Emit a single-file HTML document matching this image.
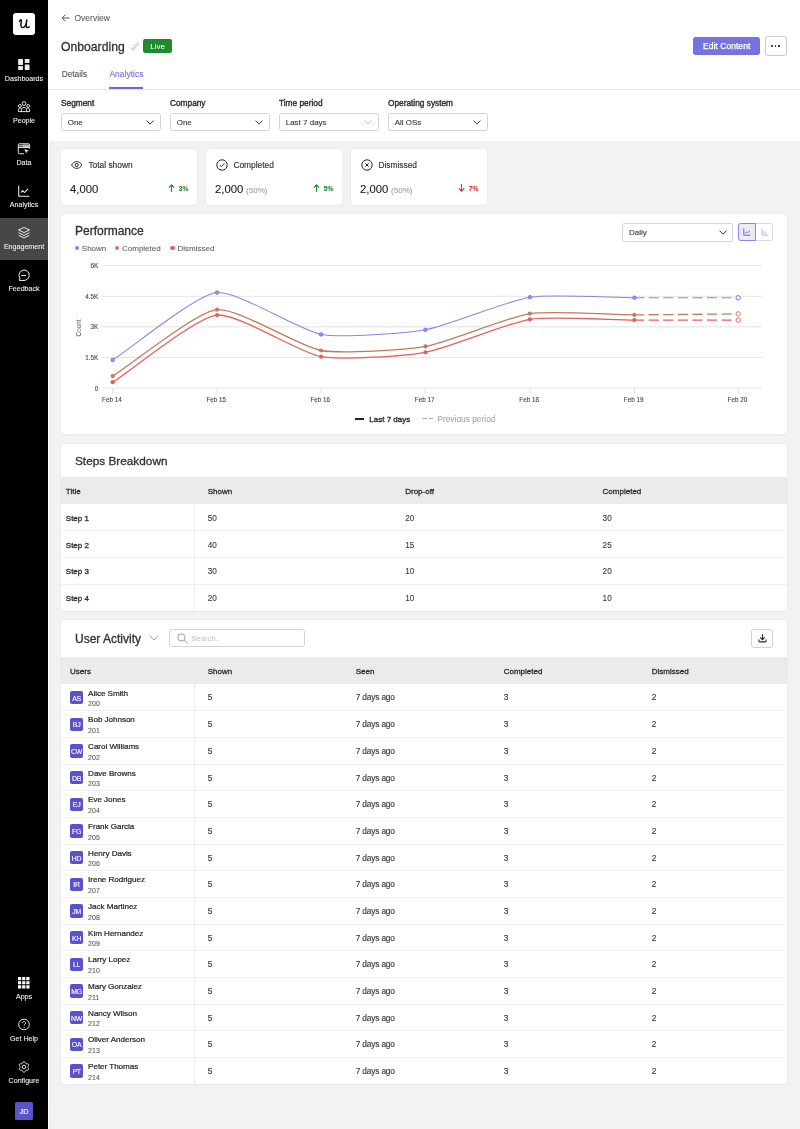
<!DOCTYPE html>
<html><head><meta charset="utf-8"><title>Onboarding Analytics</title>
<style>
html,body{margin:0;padding:0;}
body{width:800px;height:1129px;position:relative;overflow:hidden;background:#f2f2f3;font-family:"Liberation Sans", sans-serif;}
#root{position:absolute;left:0;top:0;width:800px;height:1129px;will-change:transform;}
.t{position:absolute;white-space:nowrap;}
.b{position:absolute;}
</style></head><body><div id="root">
<div class="b" style="left:0.00px;top:0.00px;width:48.00px;height:1129.00px;background:#000;"></div><div class="b" style="left:13.00px;top:13.00px;width:22.00px;height:22.00px;background:#fff;border-radius:3px;"></div><svg class="b" style="left:18.50px;top:19.30px;width:11px;height:10px;overflow:visible;" viewBox="0 0 11 10"><path d="M0.5 2.4C0.9 1.2 1.7 0.5 2.3 0.9 2.8 1.3 2.3 3 2 4.6 1.7 6.3 1.8 8.4 3.7 8.6 5.6 8.8 7 6.5 7.8 1 7.3 3.6 7 6 7.2 7.4 7.4 8.8 8.6 8.9 10.2 7.8" fill="none" stroke="#111" stroke-width="1.5" stroke-linecap="round" stroke-linejoin="round"/></svg><div class="b" style="left:0.00px;top:218.00px;width:48.00px;height:42.00px;background:#464648;"></div><svg class="b" style="left:18.00px;top:59.00px;width:12px;height:12px;overflow:visible;" viewBox="0 0 12 12"><g fill="#eee"><rect x="0.1" y="0" width="4.9" height="6" rx="0.4"/><rect x="6.75" y="0" width="4.75" height="4" rx="0.4"/><rect x="0.1" y="7.1" width="4.9" height="3.9" rx="0.4"/><rect x="6.75" y="5.6" width="4.75" height="5.4" rx="0.4"/></g></svg><div class="t" style="left:0.00px;top:76px;font-size:7.1px;line-height:7.1px;color:#eee;-webkit-text-stroke:0.1px #eee;width:48px;text-align:center;">Dashboards</div><svg class="b" style="left:18.00px;top:101.00px;width:12px;height:12px;overflow:visible;" viewBox="0 0 12 12"><g fill="none" stroke="#eee" stroke-width="0.95"><circle cx="6" cy="2.5" r="1.9"/><circle cx="1.9" cy="5" r="1.45"/><circle cx="10.1" cy="5" r="1.45"/><path d="M3.4 10.6V9.1c0-1.5 1.2-2.6 2.6-2.6s2.6 1.1 2.6 2.6v1.5"/><path d="M0.4 10.6V8.7c0-0.9 0.7-1.6 1.6-1.6 0.6 0 1 0.2 1.4 0.6"/><path d="M11.6 10.6V8.7c0-0.9-0.7-1.6-1.6-1.6-0.6 0-1 0.2-1.4 0.6"/><path d="M0.4 10.6h11.2"/></g></svg><div class="t" style="left:0.00px;top:118px;font-size:7.1px;line-height:7.1px;color:#eee;-webkit-text-stroke:0.1px #eee;width:48px;text-align:center;">People</div><svg class="b" style="left:18.00px;top:143.00px;width:12px;height:12px;overflow:visible;" viewBox="0 0 12 12"><g fill="none" stroke="#eee" stroke-width="0.95"><path d="M6 10.75H1.3Q0.3 10.75 0.3 9.7V1.8Q0.3 0.75 1.3 0.75H10.6Q11.6 0.75 11.6 1.8V5.6"/><path d="M0.3 4.5H11.6"/><rect x="5" y="2.1" width="5.3" height="1.2"/></g><rect x="1.1" y="1.9" width="3.2" height="1.7" fill="#aaa"/><path d="M6.3 6L11.1 7.8 8.9 8.6 8.3 10.6Z" fill="#eee"/></svg><div class="t" style="left:0.00px;top:160px;font-size:7.1px;line-height:7.1px;color:#eee;-webkit-text-stroke:0.1px #eee;width:48px;text-align:center;">Data</div><svg class="b" style="left:18.00px;top:185.00px;width:12px;height:12px;overflow:visible;" viewBox="0 0 12 12"><g fill="none" stroke="#eee" stroke-width="1.05" stroke-linejoin="round" stroke-linecap="round"><path d="M0.75 1V11.25H11"/><path d="M3.25 7.3L4.6 5.5 6.5 7.5 9.75 4.1"/></g></svg><div class="t" style="left:0.00px;top:202px;font-size:7.1px;line-height:7.1px;color:#eee;-webkit-text-stroke:0.1px #eee;width:48px;text-align:center;">Analytics</div><svg class="b" style="left:18.00px;top:227.00px;width:12px;height:12px;overflow:visible;" viewBox="0 0 12 12"><g fill="none" stroke="#eee" stroke-width="0.95" stroke-linejoin="round"><path d="M0.5 3L6 0.5 11.5 3 6 5.6Z"/><path d="M0.5 5.7L6 8.4 11.5 5.7"/><path d="M0.5 8.3L6 11 11.5 8.3"/></g></svg><div class="t" style="left:0.00px;top:244px;font-size:7.1px;line-height:7.1px;color:#eee;-webkit-text-stroke:0.1px #eee;width:48px;text-align:center;">Engagement</div><svg class="b" style="left:18.00px;top:269.00px;width:12px;height:12px;overflow:visible;" viewBox="0 0 12 12"><g fill="none" stroke="#eee" stroke-width="1"><path d="M6 1.05A5.2 5.2 0 0 1 6 11.45H1.3L1.9 9.2A5.2 5.2 0 0 1 6 1.05Z" stroke-linejoin="round"/><path d="M3.3 6.5H8"/></g></svg><div class="t" style="left:0.00px;top:286px;font-size:7.1px;line-height:7.1px;color:#eee;-webkit-text-stroke:0.1px #eee;width:48px;text-align:center;">Feedback</div><svg class="b" style="left:18.00px;top:976.60px;width:12px;height:12px;overflow:visible;" viewBox="0 0 12 12"><rect x="0.00" y="0.00" width="3.2" height="3.2" rx="0.3" fill="#fff"/><rect x="0.00" y="4.15" width="3.2" height="3.2" rx="0.3" fill="#fff"/><rect x="0.00" y="8.30" width="3.2" height="3.2" rx="0.3" fill="#fff"/><rect x="4.15" y="0.00" width="3.2" height="3.2" rx="0.3" fill="#fff"/><rect x="4.15" y="4.15" width="3.2" height="3.2" rx="0.3" fill="#fff"/><rect x="4.15" y="8.30" width="3.2" height="3.2" rx="0.3" fill="#fff"/><rect x="8.30" y="0.00" width="3.2" height="3.2" rx="0.3" fill="#fff"/><rect x="8.30" y="4.15" width="3.2" height="3.2" rx="0.3" fill="#fff"/><rect x="8.30" y="8.30" width="3.2" height="3.2" rx="0.3" fill="#fff"/></svg><div class="t" style="left:0.00px;top:994px;font-size:7.1px;line-height:7.1px;color:#eee;-webkit-text-stroke:0.1px #eee;width:48px;text-align:center;">Apps</div><svg class="b" style="left:18.00px;top:1018.80px;width:12px;height:12px;overflow:visible;" viewBox="0 0 12 12"><g fill="none" stroke="#eee" stroke-width="0.95"><circle cx="6" cy="5.5" r="5.3"/><path d="M4.4 4.2c0-1 0.7-1.6 1.6-1.6s1.6 0.6 1.6 1.5c0 1.2-1.5 1.2-1.5 2.6"/></g><circle cx="6.1" cy="8.3" r="0.65" fill="#eee"/></svg><div class="t" style="left:0.00px;top:1036px;font-size:7.1px;line-height:7.1px;color:#eee;-webkit-text-stroke:0.1px #eee;width:48px;text-align:center;">Get Help</div><svg class="b" style="left:18.00px;top:1060.90px;width:12px;height:12px;overflow:visible;" viewBox="0 0 12 12"><g fill="none" stroke="#eee" stroke-width="1"><path d="M6.00 0.65 L6.28 0.69 L6.54 0.82 L6.79 1.02 L7.00 1.27 L7.19 1.56 L7.35 1.85 L7.49 2.12 L7.62 2.35 L7.76 2.54 L7.92 2.67 L8.12 2.74 L8.35 2.77 L8.62 2.77 L8.92 2.75 L9.25 2.75 L9.59 2.77 L9.92 2.83 L10.21 2.94 L10.46 3.11 L10.63 3.32 L10.73 3.59 L10.76 3.88 L10.71 4.19 L10.60 4.51 L10.44 4.81 L10.27 5.09 L10.11 5.35 L9.97 5.58 L9.88 5.80 L9.85 6.00 L9.88 6.20 L9.97 6.42 L10.11 6.65 L10.27 6.91 L10.44 7.19 L10.60 7.49 L10.71 7.81 L10.76 8.12 L10.73 8.41 L10.63 8.67 L10.46 8.89 L10.21 9.06 L9.92 9.17 L9.59 9.23 L9.25 9.25 L8.92 9.25 L8.62 9.23 L8.35 9.23 L8.12 9.26 L7.92 9.33 L7.76 9.46 L7.62 9.65 L7.49 9.88 L7.35 10.15 L7.19 10.44 L7.00 10.73 L6.79 10.98 L6.54 11.18 L6.28 11.31 L6.00 11.35 L5.72 11.31 L5.46 11.18 L5.21 10.98 L5.00 10.73 L4.81 10.44 L4.65 10.15 L4.51 9.88 L4.38 9.65 L4.24 9.46 L4.08 9.33 L3.88 9.26 L3.65 9.23 L3.38 9.23 L3.08 9.25 L2.75 9.25 L2.41 9.23 L2.08 9.17 L1.79 9.06 L1.54 8.89 L1.37 8.68 L1.27 8.41 L1.24 8.12 L1.29 7.81 L1.40 7.49 L1.56 7.19 L1.73 6.91 L1.89 6.65 L2.03 6.42 L2.12 6.20 L2.15 6.00 L2.12 5.80 L2.03 5.58 L1.89 5.35 L1.73 5.09 L1.56 4.81 L1.40 4.51 L1.29 4.19 L1.24 3.88 L1.27 3.59 L1.37 3.32 L1.54 3.11 L1.79 2.94 L2.08 2.83 L2.41 2.77 L2.75 2.75 L3.08 2.75 L3.38 2.77 L3.65 2.77 L3.88 2.74 L4.08 2.67 L4.24 2.54 L4.38 2.35 L4.51 2.12 L4.65 1.85 L4.81 1.56 L5.00 1.27 L5.21 1.02 L5.46 0.82 L5.72 0.69 L6.00 0.65Z" stroke-linejoin="round"/><circle cx="6" cy="6" r="1.75"/></g></svg><div class="t" style="left:0.00px;top:1078px;font-size:7.1px;line-height:7.1px;color:#eee;-webkit-text-stroke:0.1px #eee;width:48px;text-align:center;">Configure</div><div class="b" style="left:15.00px;top:1102.00px;width:18.00px;height:18.00px;background:#5a54c6;border-radius:1.5px;"></div><div class="t" style="left:15.00px;top:1108px;font-size:7.2px;line-height:7.2px;color:#fff;-webkit-text-stroke:0.12px #fff;width:18px;text-align:center;">JD</div><div class="b" style="left:48.00px;top:0.00px;width:752.00px;height:141.00px;background:#fff;"></div><div class="b" style="left:48.00px;top:141.00px;width:1.30px;height:988.00px;background:#fff;"></div><div class="b" style="left:48.00px;top:88.80px;width:752.00px;height:1.00px;background:#e4e4e7;"></div><svg class="b" style="left:61.00px;top:14.30px;width:9px;height:8px;overflow:visible;" viewBox="0 0 9 8"><path d="M8.6 4H1.2M4.4 0.7L1.1 4l3.3 3.3" fill="none" stroke="#555" stroke-width="1"/></svg><div class="t" style="left:74.50px;top:14px;font-size:8.5px;line-height:8.5px;color:#666;-webkit-text-stroke:0.12px #666;">Overview</div><div class="t" style="left:61.00px;top:41px;font-size:12.2px;line-height:12.2px;color:#333;-webkit-text-stroke:0.3px #333;">Onboarding</div><svg class="b" style="left:130.50px;top:41.50px;width:8px;height:9px;overflow:visible;" viewBox="0 0 8 9"><path d="M1.2 8.2l0.3-2.2 4.6-4.8c0.4-0.4 0.9-0.4 1.2 0 0.3 0.3 0.3 0.8 0 1.1L2.8 7.3z" fill="none" stroke="#aaa" stroke-width="0.75"/></svg><div class="b" style="left:143.20px;top:39.00px;width:28.80px;height:14.00px;background:#1f8a2e;border-radius:2px;"></div><div class="t" style="left:143.20px;top:43px;font-size:8px;line-height:8px;color:#fff;-webkit-text-stroke:0.02px #fff;width:28.8px;text-align:center;">Live</div><div class="b" style="left:693.30px;top:36.80px;width:66.70px;height:18.50px;background:#7772e1;border-radius:2.7px;"></div><div class="t" style="left:693.30px;top:42px;font-size:8.5px;line-height:8.5px;color:#fff;letter-spacing:0.05px;-webkit-text-stroke:0.25px #fff;width:66.7px;text-align:center;">Edit Content</div><div class="b" style="left:764.50px;top:36.30px;width:22.50px;height:19.30px;background:#fff;border:0.8px solid #c9c9cf;border-radius:2.7px;box-sizing:border-box;"></div><div class="b" style="left:771.45px;top:45.40px;width:1.50px;height:1.50px;background:#222;border-radius:50%;"></div><div class="b" style="left:774.95px;top:45.40px;width:1.50px;height:1.50px;background:#222;border-radius:50%;"></div><div class="b" style="left:778.45px;top:45.40px;width:1.50px;height:1.50px;background:#222;border-radius:50%;"></div><div class="t" style="left:61.70px;top:70px;font-size:8.3px;line-height:8.3px;color:#555;-webkit-text-stroke:0.12px #555;">Details</div><div class="t" style="left:109.40px;top:70px;font-size:8.5px;line-height:8.5px;color:#7770e0;-webkit-text-stroke:0.12px #7770e0;">Analytics</div><div class="b" style="left:109.40px;top:87.30px;width:33.90px;height:1.70px;background:#6f67e0;"></div><div class="t" style="left:61.00px;top:99px;font-size:8.3px;line-height:8.3px;color:#333;-webkit-text-stroke:0.4px #333;">Segment</div><div class="b" style="left:61.00px;top:113.00px;width:100.00px;height:18.30px;background:#fff;border:0.8px solid #d3d3d8;border-radius:2.7px;box-sizing:border-box;"></div><div class="t" style="left:67.70px;top:119px;font-size:8px;line-height:8px;color:#3a3a3a;-webkit-text-stroke:0.12px #3a3a3a;">One</div><svg class="b" style="left:146.00px;top:119.60px;width:8px;height:5px;overflow:visible;" viewBox="0 0 8 5"><path d="M0.5 0.6L4 4.2 7.5 0.6" fill="none" stroke="#333" stroke-width="1"/></svg><div class="t" style="left:170.00px;top:99px;font-size:8.3px;line-height:8.3px;color:#333;-webkit-text-stroke:0.4px #333;">Company</div><div class="b" style="left:170.00px;top:113.00px;width:100.00px;height:18.30px;background:#fff;border:0.8px solid #d3d3d8;border-radius:2.7px;box-sizing:border-box;"></div><div class="t" style="left:176.70px;top:119px;font-size:8px;line-height:8px;color:#3a3a3a;-webkit-text-stroke:0.12px #3a3a3a;">One</div><svg class="b" style="left:255.00px;top:119.60px;width:8px;height:5px;overflow:visible;" viewBox="0 0 8 5"><path d="M0.5 0.6L4 4.2 7.5 0.6" fill="none" stroke="#333" stroke-width="1"/></svg><div class="t" style="left:279.00px;top:99px;font-size:8.3px;line-height:8.3px;color:#333;-webkit-text-stroke:0.4px #333;">Time period</div><div class="b" style="left:279.00px;top:113.00px;width:100.00px;height:18.30px;background:#fff;border:0.8px solid #d3d3d8;border-radius:2.7px;box-sizing:border-box;"></div><div class="t" style="left:285.70px;top:119px;font-size:8px;line-height:8px;color:#3a3a3a;-webkit-text-stroke:0.12px #3a3a3a;">Last 7 days</div><svg class="b" style="left:364.00px;top:119.60px;width:8px;height:5px;overflow:visible;" viewBox="0 0 8 5"><path d="M0.5 0.6L4 4.2 7.5 0.6" fill="none" stroke="#c3c3c8" stroke-width="1"/></svg><div class="t" style="left:388.00px;top:99px;font-size:8.3px;line-height:8.3px;color:#333;-webkit-text-stroke:0.4px #333;">Operating system</div><div class="b" style="left:388.00px;top:113.00px;width:100.00px;height:18.30px;background:#fff;border:0.8px solid #d3d3d8;border-radius:2.7px;box-sizing:border-box;"></div><div class="t" style="left:394.70px;top:119px;font-size:8px;line-height:8px;color:#3a3a3a;-webkit-text-stroke:0.12px #3a3a3a;">All OSs</div><svg class="b" style="left:473.00px;top:119.60px;width:8px;height:5px;overflow:visible;" viewBox="0 0 8 5"><path d="M0.5 0.6L4 4.2 7.5 0.6" fill="none" stroke="#333" stroke-width="1"/></svg><div class="b" style="left:61.00px;top:149.40px;width:136.00px;height:55.40px;background:#fff;border-radius:4px;box-shadow:0 0 0 0.6px #e7e7eb, 0 0.6px 1.2px rgba(0,0,0,0.04);"></div><svg class="b" style="left:71.00px;top:161.30px;width:11.5px;height:8px;overflow:visible;" viewBox="0 0 11.5 8"><path d="M0.6 4C1.8 1.8 3.6 0.6 5.75 0.6S9.7 1.8 10.9 4C9.7 6.2 7.9 7.4 5.75 7.4S1.8 6.2 0.6 4z" fill="none" stroke="#2a2a2a" stroke-width="1"/><circle cx="5.75" cy="4" r="1.6" fill="none" stroke="#2a2a2a" stroke-width="1"/></svg><div class="t" style="left:88.40px;top:161px;font-size:8.4px;line-height:8.4px;color:#333;-webkit-text-stroke:0.15px #333;">Total shown</div><div class="t" style="left:70.00px;top:184px;font-size:11.3px;line-height:11.3px;color:#222;-webkit-text-stroke:0.1px #222;">4,000</div><svg class="b" style="left:168.00px;top:184.30px;width:7px;height:8px;overflow:visible;" viewBox="0 0 7 8"><path d="M3.5 8V0.9M0.8 3.6L3.5 0.9 6.2 3.6" fill="none" stroke="#2b8a37" stroke-width="1.15"/></svg><div class="t" style="left:178.80px;top:186px;font-size:6.6px;line-height:6.6px;color:#2b8a37;font-weight:700;-webkit-text-stroke:0.12px #2b8a37;">3%</div><div class="b" style="left:206.00px;top:149.40px;width:136.00px;height:55.40px;background:#fff;border-radius:4px;box-shadow:0 0 0 0.6px #e7e7eb, 0 0.6px 1.2px rgba(0,0,0,0.04);"></div><svg class="b" style="left:216.00px;top:159.30px;width:12px;height:12px;overflow:visible;" viewBox="0 0 12 12"><circle cx="6" cy="6" r="5.2" fill="none" stroke="#2a2a2a" stroke-width="1"/><path d="M3.7 6.1l1.6 1.6 3.1-3.3" fill="none" stroke="#2a2a2a" stroke-width="1"/></svg><div class="t" style="left:233.40px;top:161px;font-size:8.4px;line-height:8.4px;color:#333;-webkit-text-stroke:0.15px #333;">Completed</div><div class="t" style="left:215.00px;top:184px;font-size:11.3px;line-height:11.3px;color:#222;-webkit-text-stroke:0.1px #222;">2,000</div><div class="t" style="left:246.10px;top:187px;font-size:8px;line-height:8px;color:#a3a3a3;-webkit-text-stroke:0.12px #a3a3a3;">(50%)</div><svg class="b" style="left:313.00px;top:184.30px;width:7px;height:8px;overflow:visible;" viewBox="0 0 7 8"><path d="M3.5 8V0.9M0.8 3.6L3.5 0.9 6.2 3.6" fill="none" stroke="#2b8a37" stroke-width="1.15"/></svg><div class="t" style="left:323.80px;top:186px;font-size:6.6px;line-height:6.6px;color:#2b8a37;font-weight:700;-webkit-text-stroke:0.12px #2b8a37;">5%</div><div class="b" style="left:351.00px;top:149.40px;width:136.00px;height:55.40px;background:#fff;border-radius:4px;box-shadow:0 0 0 0.6px #e7e7eb, 0 0.6px 1.2px rgba(0,0,0,0.04);"></div><svg class="b" style="left:361.00px;top:159.30px;width:12px;height:12px;overflow:visible;" viewBox="0 0 12 12"><circle cx="6" cy="6" r="5.2" fill="none" stroke="#2a2a2a" stroke-width="1"/><path d="M4.3 4.3l3.4 3.4M7.7 4.3l-3.4 3.4" fill="none" stroke="#2a2a2a" stroke-width="1"/></svg><div class="t" style="left:378.40px;top:161px;font-size:8.4px;line-height:8.4px;color:#333;-webkit-text-stroke:0.15px #333;">Dismissed</div><div class="t" style="left:360.00px;top:184px;font-size:11.3px;line-height:11.3px;color:#222;-webkit-text-stroke:0.1px #222;">2,000</div><div class="t" style="left:391.10px;top:187px;font-size:8px;line-height:8px;color:#a3a3a3;-webkit-text-stroke:0.12px #a3a3a3;">(50%)</div><svg class="b" style="left:458.00px;top:184.30px;width:7px;height:8px;overflow:visible;" viewBox="0 0 7 8"><path d="M3.5 0V7.1M0.8 4.4L3.5 7.1 6.2 4.4" fill="none" stroke="#df2f2c" stroke-width="1.15"/></svg><div class="t" style="left:468.80px;top:186px;font-size:6.6px;line-height:6.6px;color:#df2f2c;font-weight:700;-webkit-text-stroke:0.12px #df2f2c;">7%</div><div class="b" style="left:61.00px;top:213.80px;width:726.00px;height:220.40px;background:#fff;border-radius:4px;box-shadow:0 0 0 0.6px #e7e7eb, 0 0.6px 1.2px rgba(0,0,0,0.04);"></div><div class="t" style="left:75.00px;top:225px;font-size:12px;line-height:12px;color:#333;-webkit-text-stroke:0.32px #333;">Performance</div><div class="b" style="left:74.60px;top:245.60px;width:4.40px;height:4.40px;background:#8880e6;border-radius:50%;"></div><div class="t" style="left:81.80px;top:245px;font-size:8px;line-height:8px;color:#5e5e5e;-webkit-text-stroke:0.08px #5e5e5e;">Shown</div><div class="b" style="left:114.80px;top:245.60px;width:4.40px;height:4.40px;background:#c47a58;border-radius:50%;"></div><div class="t" style="left:122.00px;top:245px;font-size:8px;line-height:8px;color:#5e5e5e;-webkit-text-stroke:0.08px #5e5e5e;">Completed</div><div class="b" style="left:170.30px;top:245.60px;width:4.40px;height:4.40px;background:#e35f5f;border-radius:50%;"></div><div class="t" style="left:177.50px;top:245px;font-size:8px;line-height:8px;color:#5e5e5e;-webkit-text-stroke:0.08px #5e5e5e;">Dismissed</div><div class="b" style="left:622.40px;top:223.30px;width:111.00px;height:18.30px;background:#fff;border:0.8px solid #d3d3d8;border-radius:2.7px;box-sizing:border-box;"></div><div class="t" style="left:629.00px;top:229px;font-size:8px;line-height:8px;color:#3a3a3a;-webkit-text-stroke:0.12px #3a3a3a;">Daily</div><svg class="b" style="left:718.50px;top:229.60px;width:8px;height:5px;overflow:visible;" viewBox="0 0 8 5"><path d="M0.5 0.6L4 4.2 7.5 0.6" fill="none" stroke="#333" stroke-width="1"/></svg><div class="b" style="left:738.10px;top:223.30px;width:35.00px;height:17.30px;background:#fff;border:0.8px solid #d8d8e0;border-radius:2.7px;box-sizing:border-box;"></div><div class="b" style="left:738.10px;top:223.30px;width:17.50px;height:17.30px;background:#ebebf2;border:1px solid #8c84ea;border-radius:2.7px 0 0 2.7px;box-sizing:border-box;"></div><svg class="b" style="left:743.00px;top:228.00px;width:8px;height:8px;overflow:visible;" viewBox="0 0 8 8"><path d="M0.8 0.3V7.2H7.6" fill="none" stroke="#6f66df" stroke-width="1"/><path d="M2 5.3l1.6-1.3 1 0.8 2.4-2.2" fill="none" stroke="#6f66df" stroke-width="0.9"/></svg><svg class="b" style="left:760.50px;top:228.00px;width:8px;height:8px;overflow:visible;" viewBox="0 0 8 8"><path d="M1 0.8V7.2H7.4M2.9 2.5V6.2M4.8 3.6V6.2" fill="none" stroke="#b5b0ee" stroke-width="0.9"/></svg><svg class="b" style="left:0;top:0;width:800px;height:1129px;" viewBox="0 0 800 1129"><line x1="102.3" y1="265.65" x2="762.2" y2="265.65" stroke="#e0e0e5" stroke-width="0.9"/><line x1="102.3" y1="296.25" x2="762.2" y2="296.25" stroke="#e0e0e5" stroke-width="0.9"/><line x1="102.3" y1="326.85" x2="762.2" y2="326.85" stroke="#e0e0e5" stroke-width="0.9"/><line x1="102.3" y1="357.45" x2="762.2" y2="357.45" stroke="#e0e0e5" stroke-width="0.9"/><line x1="102.3" y1="388.05" x2="762.2" y2="388.05" stroke="#e0e0e5" stroke-width="0.9"/><line x1="112.67" y1="388.05" x2="112.67" y2="393.6" stroke="#e0e0e5" stroke-width="0.9"/><line x1="217.05" y1="388.05" x2="217.05" y2="393.6" stroke="#e0e0e5" stroke-width="0.9"/><line x1="321.05" y1="388.05" x2="321.05" y2="393.6" stroke="#e0e0e5" stroke-width="0.9"/><line x1="425.45" y1="388.05" x2="425.45" y2="393.6" stroke="#e0e0e5" stroke-width="0.9"/><line x1="529.9" y1="388.05" x2="529.9" y2="393.6" stroke="#e0e0e5" stroke-width="0.9"/><line x1="634.4" y1="388.05" x2="634.4" y2="393.6" stroke="#e0e0e5" stroke-width="0.9"/><line x1="738.2" y1="388.05" x2="738.2" y2="393.6" stroke="#e0e0e5" stroke-width="0.9"/><path d="M112.67 359.96 C133.55 346.49 195.14 295.29 217.05 292.60 C236.82 290.18 299.48 330.55 321.05 334.40 C341.16 337.99 405.05 333.44 425.45 329.80 C446.82 325.99 508.52 300.43 529.90 297.15 C550.31 294.02 613.50 297.68 634.40 297.75" fill="none" stroke="#8a82e8" stroke-width="1.05"/><path d="M634.40 297.75 C655.16 297.81 717.44 297.79 738.20 297.80" fill="none" stroke="#8a82e8" stroke-width="1.05" stroke-dasharray="10 4.5"/><circle cx="112.67" cy="359.96" r="1.75" fill="#9c95ee" stroke="#6d63e0" stroke-width="0.8"/><circle cx="217.05" cy="292.6" r="1.75" fill="#9c95ee" stroke="#6d63e0" stroke-width="0.8"/><circle cx="321.05" cy="334.4" r="1.75" fill="#9c95ee" stroke="#6d63e0" stroke-width="0.8"/><circle cx="425.45" cy="329.8" r="1.75" fill="#9c95ee" stroke="#6d63e0" stroke-width="0.8"/><circle cx="529.9" cy="297.15" r="1.75" fill="#9c95ee" stroke="#6d63e0" stroke-width="0.8"/><circle cx="634.4" cy="297.75" r="1.75" fill="#9c95ee" stroke="#6d63e0" stroke-width="0.8"/><circle cx="738.2" cy="297.8" r="2.2" fill="#fff" stroke="#6d63e0" stroke-width="0.95"/><path d="M112.67 376.10 C133.55 362.82 195.15 312.39 217.05 309.70 C236.83 307.27 299.51 346.71 321.05 350.50 C341.19 354.05 405.05 350.00 425.45 346.40 C446.82 342.62 508.52 316.83 529.90 313.60 C550.31 310.51 613.50 314.77 634.40 314.80" fill="none" stroke="#c47a58" stroke-width="1.3"/><path d="M634.40 314.80 C655.16 314.83 717.44 314.08 738.20 313.90" fill="none" stroke="#c47a58" stroke-width="1.3" stroke-dasharray="10 4.5"/><circle cx="112.67" cy="376.1" r="2.1" fill="#c47a58"/><circle cx="217.05" cy="309.7" r="2.1" fill="#c47a58"/><circle cx="321.05" cy="350.5" r="2.1" fill="#c47a58"/><circle cx="425.45" cy="346.4" r="2.1" fill="#c47a58"/><circle cx="529.9" cy="313.6" r="2.1" fill="#c47a58"/><circle cx="634.4" cy="314.8" r="2.1" fill="#c47a58"/><circle cx="738.2" cy="313.9" r="2.2" fill="#fff" stroke="#c47a58" stroke-width="0.95"/><path d="M112.67 382.20 C133.55 368.78 195.15 317.78 217.05 315.10 C236.82 312.68 299.49 352.85 321.05 356.70 C341.17 360.29 405.06 355.95 425.45 352.30 C446.83 348.47 508.51 322.60 529.90 319.30 C550.30 316.15 613.50 319.98 634.40 320.06" fill="none" stroke="#e35f5f" stroke-width="1.3"/><path d="M634.40 320.06 C655.16 320.14 717.44 320.09 738.20 320.10" fill="none" stroke="#e35f5f" stroke-width="1.3" stroke-dasharray="10 4.5"/><circle cx="112.67" cy="382.2" r="2.1" fill="#e35f5f"/><circle cx="217.05" cy="315.1" r="2.1" fill="#e35f5f"/><circle cx="321.05" cy="356.7" r="2.1" fill="#e35f5f"/><circle cx="425.45" cy="352.3" r="2.1" fill="#e35f5f"/><circle cx="529.9" cy="319.3" r="2.1" fill="#e35f5f"/><circle cx="634.4" cy="320.06" r="2.1" fill="#e35f5f"/><circle cx="738.2" cy="320.1" r="2.2" fill="#fff" stroke="#e35f5f" stroke-width="0.95"/></svg><div class="t" style="left:50.00px;top:263px;font-size:6.4px;line-height:6.4px;color:#4a4a4a;-webkit-text-stroke:0.12px #4a4a4a;width:48.3px;text-align:right;">6K</div><div class="t" style="left:50.00px;top:294px;font-size:6.4px;line-height:6.4px;color:#4a4a4a;-webkit-text-stroke:0.12px #4a4a4a;width:48.3px;text-align:right;">4.5K</div><div class="t" style="left:50.00px;top:324px;font-size:6.4px;line-height:6.4px;color:#4a4a4a;-webkit-text-stroke:0.12px #4a4a4a;width:48.3px;text-align:right;">3K</div><div class="t" style="left:50.00px;top:355px;font-size:6.4px;line-height:6.4px;color:#4a4a4a;-webkit-text-stroke:0.12px #4a4a4a;width:48.3px;text-align:right;">1.5K</div><div class="t" style="left:50.00px;top:386px;font-size:6.4px;line-height:6.4px;color:#4a4a4a;-webkit-text-stroke:0.12px #4a4a4a;width:48.3px;text-align:right;">0</div><div class="t" style="left:91.87px;top:397px;font-size:6.3px;line-height:6.3px;color:#4a4a4a;-webkit-text-stroke:0.12px #4a4a4a;width:40px;text-align:center;">Feb 14</div><div class="t" style="left:196.25px;top:397px;font-size:6.3px;line-height:6.3px;color:#4a4a4a;-webkit-text-stroke:0.12px #4a4a4a;width:40px;text-align:center;">Feb 15</div><div class="t" style="left:300.25px;top:397px;font-size:6.3px;line-height:6.3px;color:#4a4a4a;-webkit-text-stroke:0.12px #4a4a4a;width:40px;text-align:center;">Feb 16</div><div class="t" style="left:404.65px;top:397px;font-size:6.3px;line-height:6.3px;color:#4a4a4a;-webkit-text-stroke:0.12px #4a4a4a;width:40px;text-align:center;">Feb 17</div><div class="t" style="left:509.10px;top:397px;font-size:6.3px;line-height:6.3px;color:#4a4a4a;-webkit-text-stroke:0.12px #4a4a4a;width:40px;text-align:center;">Feb 18</div><div class="t" style="left:613.60px;top:397px;font-size:6.3px;line-height:6.3px;color:#4a4a4a;-webkit-text-stroke:0.12px #4a4a4a;width:40px;text-align:center;">Feb 19</div><div class="t" style="left:717.40px;top:397px;font-size:6.3px;line-height:6.3px;color:#4a4a4a;-webkit-text-stroke:0.12px #4a4a4a;width:40px;text-align:center;">Feb 20</div><div class="t" style="left:64px;top:323.6px;width:30px;height:8px;font-size:6.3px;line-height:8px;color:#4a4a4a;text-align:center;transform:rotate(-90deg);">Count</div><div class="b" style="left:355.30px;top:418.00px;width:8.80px;height:1.60px;background:#222;"></div><div class="t" style="left:369.30px;top:416px;font-size:8px;line-height:8px;color:#2e2e2e;-webkit-text-stroke:0.35px #2e2e2e;">Last 7 days</div><div class="b" style="left:422.90px;top:418.30px;width:3.90px;height:1.10px;background:#aaa;"></div><div class="b" style="left:428.90px;top:418.30px;width:3.90px;height:1.10px;background:#aaa;"></div><div class="t" style="left:437.30px;top:415px;font-size:8.4px;line-height:8.4px;color:#a9a9a9;-webkit-text-stroke:0.12px #a9a9a9;">Previous period</div><div class="b" style="left:61.00px;top:443.60px;width:726.00px;height:167.20px;background:#fff;border-radius:4px;box-shadow:0 0 0 0.6px #e7e7eb, 0 0.6px 1.2px rgba(0,0,0,0.04);"></div><div class="t" style="left:75.00px;top:456px;font-size:11.8px;line-height:11.8px;color:#333;-webkit-text-stroke:0.32px #333;">Steps Breakdown</div><div class="b" style="left:61.00px;top:477.20px;width:726.00px;height:26.60px;background:#ebebee;"></div><div class="t" style="left:65.80px;top:488px;font-size:8px;line-height:8px;color:#2e2e2e;-webkit-text-stroke:0.3px #2e2e2e;">Title</div><div class="t" style="left:207.70px;top:488px;font-size:8px;line-height:8px;color:#2e2e2e;-webkit-text-stroke:0.3px #2e2e2e;">Shown</div><div class="t" style="left:405.20px;top:488px;font-size:8px;line-height:8px;color:#2e2e2e;-webkit-text-stroke:0.3px #2e2e2e;">Drop-off</div><div class="t" style="left:602.60px;top:488px;font-size:8px;line-height:8px;color:#2e2e2e;-webkit-text-stroke:0.3px #2e2e2e;">Completed</div><div class="t" style="left:65.80px;top:515px;font-size:8px;line-height:8px;color:#2e2e2e;-webkit-text-stroke:0.3px #2e2e2e;">Step 1</div><div class="t" style="left:207.70px;top:515px;font-size:8.2px;line-height:8.2px;color:#3e3e3e;-webkit-text-stroke:0.12px #3e3e3e;">50</div><div class="t" style="left:405.20px;top:515px;font-size:8.2px;line-height:8.2px;color:#3e3e3e;-webkit-text-stroke:0.12px #3e3e3e;">20</div><div class="t" style="left:602.60px;top:515px;font-size:8.2px;line-height:8.2px;color:#3e3e3e;-webkit-text-stroke:0.12px #3e3e3e;">30</div><div class="b" style="left:61.00px;top:530.05px;width:726.00px;height:0.90px;background:#efeff1;"></div><div class="t" style="left:65.80px;top:542px;font-size:8px;line-height:8px;color:#2e2e2e;-webkit-text-stroke:0.3px #2e2e2e;">Step 2</div><div class="t" style="left:207.70px;top:542px;font-size:8.2px;line-height:8.2px;color:#3e3e3e;-webkit-text-stroke:0.12px #3e3e3e;">40</div><div class="t" style="left:405.20px;top:542px;font-size:8.2px;line-height:8.2px;color:#3e3e3e;-webkit-text-stroke:0.12px #3e3e3e;">15</div><div class="t" style="left:602.60px;top:542px;font-size:8.2px;line-height:8.2px;color:#3e3e3e;-webkit-text-stroke:0.12px #3e3e3e;">25</div><div class="b" style="left:61.00px;top:556.80px;width:726.00px;height:0.90px;background:#efeff1;"></div><div class="t" style="left:65.80px;top:568px;font-size:8px;line-height:8px;color:#2e2e2e;-webkit-text-stroke:0.3px #2e2e2e;">Step 3</div><div class="t" style="left:207.70px;top:568px;font-size:8.2px;line-height:8.2px;color:#3e3e3e;-webkit-text-stroke:0.12px #3e3e3e;">30</div><div class="t" style="left:405.20px;top:568px;font-size:8.2px;line-height:8.2px;color:#3e3e3e;-webkit-text-stroke:0.12px #3e3e3e;">10</div><div class="t" style="left:602.60px;top:568px;font-size:8.2px;line-height:8.2px;color:#3e3e3e;-webkit-text-stroke:0.12px #3e3e3e;">20</div><div class="b" style="left:61.00px;top:583.55px;width:726.00px;height:0.90px;background:#efeff1;"></div><div class="t" style="left:65.80px;top:595px;font-size:8px;line-height:8px;color:#2e2e2e;-webkit-text-stroke:0.3px #2e2e2e;">Step 4</div><div class="t" style="left:207.70px;top:595px;font-size:8.2px;line-height:8.2px;color:#3e3e3e;-webkit-text-stroke:0.12px #3e3e3e;">20</div><div class="t" style="left:405.20px;top:595px;font-size:8.2px;line-height:8.2px;color:#3e3e3e;-webkit-text-stroke:0.12px #3e3e3e;">10</div><div class="t" style="left:602.60px;top:595px;font-size:8.2px;line-height:8.2px;color:#3e3e3e;-webkit-text-stroke:0.12px #3e3e3e;">10</div><div class="b" style="left:194.30px;top:503.80px;width:0.80px;height:107.00px;background:#efeff1;"></div><div class="b" style="left:61.00px;top:620.30px;width:726.00px;height:463.70px;background:#fff;border-radius:4px;box-shadow:0 0 0 0.6px #e7e7eb, 0 0.6px 1.2px rgba(0,0,0,0.04);"></div><div class="t" style="left:75.00px;top:633px;font-size:12px;line-height:12px;color:#333;-webkit-text-stroke:0.32px #333;">User Activity</div><svg class="b" style="left:149.00px;top:635.30px;width:10px;height:6px;overflow:visible;" viewBox="0 0 10 6"><path d="M0.6 0.6L5 5 9.4 0.6" fill="none" stroke="#999" stroke-width="0.9"/></svg><div class="b" style="left:169.10px;top:629.10px;width:135.70px;height:18.20px;background:#fff;border:0.8px solid #d3d3d8;border-radius:2.7px;box-sizing:border-box;"></div><svg class="b" style="left:176.50px;top:632.80px;width:11.5px;height:11px;overflow:visible;" viewBox="0 0 11.5 11"><circle cx="4.4" cy="4.4" r="3.6" fill="none" stroke="#9a9a9a" stroke-width="0.95"/><path d="M7 7l3.9 3.6" fill="none" stroke="#9a9a9a" stroke-width="0.95"/></svg><div class="t" style="left:191.30px;top:635px;font-size:7.7px;line-height:7.7px;color:#c4c4c8;-webkit-text-stroke:0.03px #c4c4c8;">Search..</div><div class="b" style="left:751.30px;top:628.90px;width:21.60px;height:18.90px;background:#fff;border:0.8px solid #cfcfd4;border-radius:2.7px;box-sizing:border-box;"></div><svg class="b" style="left:757.60px;top:634.00px;width:9px;height:9px;overflow:visible;" viewBox="0 0 9 9"><path d="M4.5 0.3V5.5M2.3 3.4L4.5 5.6 6.7 3.4" fill="none" stroke="#2a2a2a" stroke-width="1.1"/><path d="M0.9 5.6V7.1Q0.9 7.9 1.7 7.9H7.3Q8.1 7.9 8.1 7.1V5.6" fill="none" stroke="#2a2a2a" stroke-width="1.1"/></svg><div class="b" style="left:61.00px;top:657.20px;width:726.00px;height:26.60px;background:#ebebee;"></div><div class="t" style="left:70.00px;top:668px;font-size:8px;line-height:8px;color:#2e2e2e;-webkit-text-stroke:0.3px #2e2e2e;">Users</div><div class="t" style="left:207.70px;top:668px;font-size:8px;line-height:8px;color:#2e2e2e;-webkit-text-stroke:0.3px #2e2e2e;">Shown</div><div class="t" style="left:355.70px;top:668px;font-size:8px;line-height:8px;color:#2e2e2e;-webkit-text-stroke:0.3px #2e2e2e;">Seen</div><div class="t" style="left:503.70px;top:668px;font-size:8px;line-height:8px;color:#2e2e2e;-webkit-text-stroke:0.3px #2e2e2e;">Completed</div><div class="t" style="left:651.70px;top:668px;font-size:8px;line-height:8px;color:#2e2e2e;-webkit-text-stroke:0.3px #2e2e2e;">Dismissed</div><div class="b" style="left:70.00px;top:691.00px;width:13.20px;height:13.20px;background:#5a52c8;border-radius:2px;"></div><div class="t" style="left:70.00px;top:696px;font-size:6.9px;line-height:6.9px;color:#fff;letter-spacing:-0.2px;-webkit-text-stroke:0.12px #fff;width:13.2px;text-align:center;">AS</div><div class="t" style="left:88.10px;top:690px;font-size:8.1px;line-height:8.1px;color:#262626;letter-spacing:-0.05px;-webkit-text-stroke:0.22px #262626;">Alice Smith</div><div class="t" style="left:88.10px;top:700px;font-size:7px;line-height:7px;color:#666;-webkit-text-stroke:0.12px #666;">200</div><div class="t" style="left:207.70px;top:693px;font-size:8.3px;line-height:8.3px;color:#3a3a3a;-webkit-text-stroke:0.15px #3a3a3a;">5</div><div class="t" style="left:355.70px;top:693px;font-size:8.3px;line-height:8.3px;color:#3a3a3a;letter-spacing:-0.15px;-webkit-text-stroke:0.15px #3a3a3a;">7 days ago</div><div class="t" style="left:503.70px;top:693px;font-size:8.3px;line-height:8.3px;color:#3a3a3a;letter-spacing:-0.15px;-webkit-text-stroke:0.15px #3a3a3a;">3</div><div class="t" style="left:651.70px;top:693px;font-size:8.3px;line-height:8.3px;color:#3a3a3a;letter-spacing:-0.15px;-webkit-text-stroke:0.15px #3a3a3a;">2</div><div class="b" style="left:61.00px;top:710.17px;width:726.00px;height:0.90px;background:#efeff1;"></div><div class="b" style="left:70.00px;top:717.67px;width:13.20px;height:13.20px;background:#5a52c8;border-radius:2px;"></div><div class="t" style="left:70.00px;top:722px;font-size:6.9px;line-height:6.9px;color:#fff;letter-spacing:-0.2px;-webkit-text-stroke:0.12px #fff;width:13.2px;text-align:center;">BJ</div><div class="t" style="left:88.10px;top:716px;font-size:8.1px;line-height:8.1px;color:#262626;letter-spacing:-0.05px;-webkit-text-stroke:0.22px #262626;">Bob Johnson</div><div class="t" style="left:88.10px;top:727px;font-size:7px;line-height:7px;color:#666;-webkit-text-stroke:0.12px #666;">201</div><div class="t" style="left:207.70px;top:720px;font-size:8.3px;line-height:8.3px;color:#3a3a3a;-webkit-text-stroke:0.15px #3a3a3a;">5</div><div class="t" style="left:355.70px;top:720px;font-size:8.3px;line-height:8.3px;color:#3a3a3a;letter-spacing:-0.15px;-webkit-text-stroke:0.15px #3a3a3a;">7 days ago</div><div class="t" style="left:503.70px;top:720px;font-size:8.3px;line-height:8.3px;color:#3a3a3a;letter-spacing:-0.15px;-webkit-text-stroke:0.15px #3a3a3a;">3</div><div class="t" style="left:651.70px;top:720px;font-size:8.3px;line-height:8.3px;color:#3a3a3a;letter-spacing:-0.15px;-webkit-text-stroke:0.15px #3a3a3a;">2</div><div class="b" style="left:61.00px;top:736.84px;width:726.00px;height:0.90px;background:#efeff1;"></div><div class="b" style="left:70.00px;top:744.34px;width:13.20px;height:13.20px;background:#5a52c8;border-radius:2px;"></div><div class="t" style="left:70.00px;top:749px;font-size:6.9px;line-height:6.9px;color:#fff;letter-spacing:-0.2px;-webkit-text-stroke:0.12px #fff;width:13.2px;text-align:center;">CW</div><div class="t" style="left:88.10px;top:743px;font-size:8.1px;line-height:8.1px;color:#262626;letter-spacing:-0.05px;-webkit-text-stroke:0.22px #262626;">Carol Williams</div><div class="t" style="left:88.10px;top:754px;font-size:7px;line-height:7px;color:#666;-webkit-text-stroke:0.12px #666;">202</div><div class="t" style="left:207.70px;top:747px;font-size:8.3px;line-height:8.3px;color:#3a3a3a;-webkit-text-stroke:0.15px #3a3a3a;">5</div><div class="t" style="left:355.70px;top:747px;font-size:8.3px;line-height:8.3px;color:#3a3a3a;letter-spacing:-0.15px;-webkit-text-stroke:0.15px #3a3a3a;">7 days ago</div><div class="t" style="left:503.70px;top:747px;font-size:8.3px;line-height:8.3px;color:#3a3a3a;letter-spacing:-0.15px;-webkit-text-stroke:0.15px #3a3a3a;">3</div><div class="t" style="left:651.70px;top:747px;font-size:8.3px;line-height:8.3px;color:#3a3a3a;letter-spacing:-0.15px;-webkit-text-stroke:0.15px #3a3a3a;">2</div><div class="b" style="left:61.00px;top:763.51px;width:726.00px;height:0.90px;background:#efeff1;"></div><div class="b" style="left:70.00px;top:771.01px;width:13.20px;height:13.20px;background:#5a52c8;border-radius:2px;"></div><div class="t" style="left:70.00px;top:776px;font-size:6.9px;line-height:6.9px;color:#fff;letter-spacing:-0.2px;-webkit-text-stroke:0.12px #fff;width:13.2px;text-align:center;">DB</div><div class="t" style="left:88.10px;top:770px;font-size:8.1px;line-height:8.1px;color:#262626;letter-spacing:-0.05px;-webkit-text-stroke:0.22px #262626;">Dave Browns</div><div class="t" style="left:88.10px;top:780px;font-size:7px;line-height:7px;color:#666;-webkit-text-stroke:0.12px #666;">203</div><div class="t" style="left:207.70px;top:774px;font-size:8.3px;line-height:8.3px;color:#3a3a3a;-webkit-text-stroke:0.15px #3a3a3a;">5</div><div class="t" style="left:355.70px;top:774px;font-size:8.3px;line-height:8.3px;color:#3a3a3a;letter-spacing:-0.15px;-webkit-text-stroke:0.15px #3a3a3a;">7 days ago</div><div class="t" style="left:503.70px;top:774px;font-size:8.3px;line-height:8.3px;color:#3a3a3a;letter-spacing:-0.15px;-webkit-text-stroke:0.15px #3a3a3a;">3</div><div class="t" style="left:651.70px;top:774px;font-size:8.3px;line-height:8.3px;color:#3a3a3a;letter-spacing:-0.15px;-webkit-text-stroke:0.15px #3a3a3a;">2</div><div class="b" style="left:61.00px;top:790.18px;width:726.00px;height:0.90px;background:#efeff1;"></div><div class="b" style="left:70.00px;top:797.68px;width:13.20px;height:13.20px;background:#5a52c8;border-radius:2px;"></div><div class="t" style="left:70.00px;top:802px;font-size:6.9px;line-height:6.9px;color:#fff;letter-spacing:-0.2px;-webkit-text-stroke:0.12px #fff;width:13.2px;text-align:center;">EJ</div><div class="t" style="left:88.10px;top:796px;font-size:8.1px;line-height:8.1px;color:#262626;letter-spacing:-0.05px;-webkit-text-stroke:0.22px #262626;">Eve Jones</div><div class="t" style="left:88.10px;top:807px;font-size:7px;line-height:7px;color:#666;-webkit-text-stroke:0.12px #666;">204</div><div class="t" style="left:207.70px;top:800px;font-size:8.3px;line-height:8.3px;color:#3a3a3a;-webkit-text-stroke:0.15px #3a3a3a;">5</div><div class="t" style="left:355.70px;top:800px;font-size:8.3px;line-height:8.3px;color:#3a3a3a;letter-spacing:-0.15px;-webkit-text-stroke:0.15px #3a3a3a;">7 days ago</div><div class="t" style="left:503.70px;top:800px;font-size:8.3px;line-height:8.3px;color:#3a3a3a;letter-spacing:-0.15px;-webkit-text-stroke:0.15px #3a3a3a;">3</div><div class="t" style="left:651.70px;top:800px;font-size:8.3px;line-height:8.3px;color:#3a3a3a;letter-spacing:-0.15px;-webkit-text-stroke:0.15px #3a3a3a;">2</div><div class="b" style="left:61.00px;top:816.85px;width:726.00px;height:0.90px;background:#efeff1;"></div><div class="b" style="left:70.00px;top:824.35px;width:13.20px;height:13.20px;background:#5a52c8;border-radius:2px;"></div><div class="t" style="left:70.00px;top:829px;font-size:6.9px;line-height:6.9px;color:#fff;letter-spacing:-0.2px;-webkit-text-stroke:0.12px #fff;width:13.2px;text-align:center;">FG</div><div class="t" style="left:88.10px;top:823px;font-size:8.1px;line-height:8.1px;color:#262626;letter-spacing:-0.05px;-webkit-text-stroke:0.22px #262626;">Frank Garcia</div><div class="t" style="left:88.10px;top:834px;font-size:7px;line-height:7px;color:#666;-webkit-text-stroke:0.12px #666;">205</div><div class="t" style="left:207.70px;top:827px;font-size:8.3px;line-height:8.3px;color:#3a3a3a;-webkit-text-stroke:0.15px #3a3a3a;">5</div><div class="t" style="left:355.70px;top:827px;font-size:8.3px;line-height:8.3px;color:#3a3a3a;letter-spacing:-0.15px;-webkit-text-stroke:0.15px #3a3a3a;">7 days ago</div><div class="t" style="left:503.70px;top:827px;font-size:8.3px;line-height:8.3px;color:#3a3a3a;letter-spacing:-0.15px;-webkit-text-stroke:0.15px #3a3a3a;">3</div><div class="t" style="left:651.70px;top:827px;font-size:8.3px;line-height:8.3px;color:#3a3a3a;letter-spacing:-0.15px;-webkit-text-stroke:0.15px #3a3a3a;">2</div><div class="b" style="left:61.00px;top:843.52px;width:726.00px;height:0.90px;background:#efeff1;"></div><div class="b" style="left:70.00px;top:851.02px;width:13.20px;height:13.20px;background:#5a52c8;border-radius:2px;"></div><div class="t" style="left:70.00px;top:856px;font-size:6.9px;line-height:6.9px;color:#fff;letter-spacing:-0.2px;-webkit-text-stroke:0.12px #fff;width:13.2px;text-align:center;">HD</div><div class="t" style="left:88.10px;top:850px;font-size:8.1px;line-height:8.1px;color:#262626;letter-spacing:-0.05px;-webkit-text-stroke:0.22px #262626;">Henry Davis</div><div class="t" style="left:88.10px;top:860px;font-size:7px;line-height:7px;color:#666;-webkit-text-stroke:0.12px #666;">206</div><div class="t" style="left:207.70px;top:854px;font-size:8.3px;line-height:8.3px;color:#3a3a3a;-webkit-text-stroke:0.15px #3a3a3a;">5</div><div class="t" style="left:355.70px;top:854px;font-size:8.3px;line-height:8.3px;color:#3a3a3a;letter-spacing:-0.15px;-webkit-text-stroke:0.15px #3a3a3a;">7 days ago</div><div class="t" style="left:503.70px;top:854px;font-size:8.3px;line-height:8.3px;color:#3a3a3a;letter-spacing:-0.15px;-webkit-text-stroke:0.15px #3a3a3a;">3</div><div class="t" style="left:651.70px;top:854px;font-size:8.3px;line-height:8.3px;color:#3a3a3a;letter-spacing:-0.15px;-webkit-text-stroke:0.15px #3a3a3a;">2</div><div class="b" style="left:61.00px;top:870.19px;width:726.00px;height:0.90px;background:#efeff1;"></div><div class="b" style="left:70.00px;top:877.69px;width:13.20px;height:13.20px;background:#5a52c8;border-radius:2px;"></div><div class="t" style="left:70.00px;top:882px;font-size:6.9px;line-height:6.9px;color:#fff;letter-spacing:-0.2px;-webkit-text-stroke:0.12px #fff;width:13.2px;text-align:center;">IR</div><div class="t" style="left:88.10px;top:876px;font-size:8.1px;line-height:8.1px;color:#262626;letter-spacing:-0.05px;-webkit-text-stroke:0.22px #262626;">Irene Rodriguez</div><div class="t" style="left:88.10px;top:887px;font-size:7px;line-height:7px;color:#666;-webkit-text-stroke:0.12px #666;">207</div><div class="t" style="left:207.70px;top:880px;font-size:8.3px;line-height:8.3px;color:#3a3a3a;-webkit-text-stroke:0.15px #3a3a3a;">5</div><div class="t" style="left:355.70px;top:880px;font-size:8.3px;line-height:8.3px;color:#3a3a3a;letter-spacing:-0.15px;-webkit-text-stroke:0.15px #3a3a3a;">7 days ago</div><div class="t" style="left:503.70px;top:880px;font-size:8.3px;line-height:8.3px;color:#3a3a3a;letter-spacing:-0.15px;-webkit-text-stroke:0.15px #3a3a3a;">3</div><div class="t" style="left:651.70px;top:880px;font-size:8.3px;line-height:8.3px;color:#3a3a3a;letter-spacing:-0.15px;-webkit-text-stroke:0.15px #3a3a3a;">2</div><div class="b" style="left:61.00px;top:896.86px;width:726.00px;height:0.90px;background:#efeff1;"></div><div class="b" style="left:70.00px;top:904.36px;width:13.20px;height:13.20px;background:#5a52c8;border-radius:2px;"></div><div class="t" style="left:70.00px;top:909px;font-size:6.9px;line-height:6.9px;color:#fff;letter-spacing:-0.2px;-webkit-text-stroke:0.12px #fff;width:13.2px;text-align:center;">JM</div><div class="t" style="left:88.10px;top:903px;font-size:8.1px;line-height:8.1px;color:#262626;letter-spacing:-0.05px;-webkit-text-stroke:0.22px #262626;">Jack Martinez</div><div class="t" style="left:88.10px;top:914px;font-size:7px;line-height:7px;color:#666;-webkit-text-stroke:0.12px #666;">208</div><div class="t" style="left:207.70px;top:907px;font-size:8.3px;line-height:8.3px;color:#3a3a3a;-webkit-text-stroke:0.15px #3a3a3a;">5</div><div class="t" style="left:355.70px;top:907px;font-size:8.3px;line-height:8.3px;color:#3a3a3a;letter-spacing:-0.15px;-webkit-text-stroke:0.15px #3a3a3a;">7 days ago</div><div class="t" style="left:503.70px;top:907px;font-size:8.3px;line-height:8.3px;color:#3a3a3a;letter-spacing:-0.15px;-webkit-text-stroke:0.15px #3a3a3a;">3</div><div class="t" style="left:651.70px;top:907px;font-size:8.3px;line-height:8.3px;color:#3a3a3a;letter-spacing:-0.15px;-webkit-text-stroke:0.15px #3a3a3a;">2</div><div class="b" style="left:61.00px;top:923.53px;width:726.00px;height:0.90px;background:#efeff1;"></div><div class="b" style="left:70.00px;top:931.03px;width:13.20px;height:13.20px;background:#5a52c8;border-radius:2px;"></div><div class="t" style="left:70.00px;top:936px;font-size:6.9px;line-height:6.9px;color:#fff;letter-spacing:-0.2px;-webkit-text-stroke:0.12px #fff;width:13.2px;text-align:center;">KH</div><div class="t" style="left:88.10px;top:930px;font-size:8.1px;line-height:8.1px;color:#262626;letter-spacing:-0.05px;-webkit-text-stroke:0.22px #262626;">Kim Hernandez</div><div class="t" style="left:88.10px;top:940px;font-size:7px;line-height:7px;color:#666;-webkit-text-stroke:0.12px #666;">209</div><div class="t" style="left:207.70px;top:934px;font-size:8.3px;line-height:8.3px;color:#3a3a3a;-webkit-text-stroke:0.15px #3a3a3a;">5</div><div class="t" style="left:355.70px;top:934px;font-size:8.3px;line-height:8.3px;color:#3a3a3a;letter-spacing:-0.15px;-webkit-text-stroke:0.15px #3a3a3a;">7 days ago</div><div class="t" style="left:503.70px;top:934px;font-size:8.3px;line-height:8.3px;color:#3a3a3a;letter-spacing:-0.15px;-webkit-text-stroke:0.15px #3a3a3a;">3</div><div class="t" style="left:651.70px;top:934px;font-size:8.3px;line-height:8.3px;color:#3a3a3a;letter-spacing:-0.15px;-webkit-text-stroke:0.15px #3a3a3a;">2</div><div class="b" style="left:61.00px;top:950.20px;width:726.00px;height:0.90px;background:#efeff1;"></div><div class="b" style="left:70.00px;top:957.70px;width:13.20px;height:13.20px;background:#5a52c8;border-radius:2px;"></div><div class="t" style="left:70.00px;top:962px;font-size:6.9px;line-height:6.9px;color:#fff;letter-spacing:-0.2px;-webkit-text-stroke:0.12px #fff;width:13.2px;text-align:center;">LL</div><div class="t" style="left:88.10px;top:956px;font-size:8.1px;line-height:8.1px;color:#262626;letter-spacing:-0.05px;-webkit-text-stroke:0.22px #262626;">Larry Lopez</div><div class="t" style="left:88.10px;top:967px;font-size:7px;line-height:7px;color:#666;-webkit-text-stroke:0.12px #666;">210</div><div class="t" style="left:207.70px;top:960px;font-size:8.3px;line-height:8.3px;color:#3a3a3a;-webkit-text-stroke:0.15px #3a3a3a;">5</div><div class="t" style="left:355.70px;top:960px;font-size:8.3px;line-height:8.3px;color:#3a3a3a;letter-spacing:-0.15px;-webkit-text-stroke:0.15px #3a3a3a;">7 days ago</div><div class="t" style="left:503.70px;top:960px;font-size:8.3px;line-height:8.3px;color:#3a3a3a;letter-spacing:-0.15px;-webkit-text-stroke:0.15px #3a3a3a;">3</div><div class="t" style="left:651.70px;top:960px;font-size:8.3px;line-height:8.3px;color:#3a3a3a;letter-spacing:-0.15px;-webkit-text-stroke:0.15px #3a3a3a;">2</div><div class="b" style="left:61.00px;top:976.87px;width:726.00px;height:0.90px;background:#efeff1;"></div><div class="b" style="left:70.00px;top:984.37px;width:13.20px;height:13.20px;background:#5a52c8;border-radius:2px;"></div><div class="t" style="left:70.00px;top:989px;font-size:6.9px;line-height:6.9px;color:#fff;letter-spacing:-0.2px;-webkit-text-stroke:0.12px #fff;width:13.2px;text-align:center;">MG</div><div class="t" style="left:88.10px;top:983px;font-size:8.1px;line-height:8.1px;color:#262626;letter-spacing:-0.05px;-webkit-text-stroke:0.22px #262626;">Mary Gonzalez</div><div class="t" style="left:88.10px;top:994px;font-size:7px;line-height:7px;color:#666;-webkit-text-stroke:0.12px #666;">211</div><div class="t" style="left:207.70px;top:987px;font-size:8.3px;line-height:8.3px;color:#3a3a3a;-webkit-text-stroke:0.15px #3a3a3a;">5</div><div class="t" style="left:355.70px;top:987px;font-size:8.3px;line-height:8.3px;color:#3a3a3a;letter-spacing:-0.15px;-webkit-text-stroke:0.15px #3a3a3a;">7 days ago</div><div class="t" style="left:503.70px;top:987px;font-size:8.3px;line-height:8.3px;color:#3a3a3a;letter-spacing:-0.15px;-webkit-text-stroke:0.15px #3a3a3a;">3</div><div class="t" style="left:651.70px;top:987px;font-size:8.3px;line-height:8.3px;color:#3a3a3a;letter-spacing:-0.15px;-webkit-text-stroke:0.15px #3a3a3a;">2</div><div class="b" style="left:61.00px;top:1003.54px;width:726.00px;height:0.90px;background:#efeff1;"></div><div class="b" style="left:70.00px;top:1011.04px;width:13.20px;height:13.20px;background:#5a52c8;border-radius:2px;"></div><div class="t" style="left:70.00px;top:1016px;font-size:6.9px;line-height:6.9px;color:#fff;letter-spacing:-0.2px;-webkit-text-stroke:0.12px #fff;width:13.2px;text-align:center;">NW</div><div class="t" style="left:88.10px;top:1010px;font-size:8.1px;line-height:8.1px;color:#262626;letter-spacing:-0.05px;-webkit-text-stroke:0.22px #262626;">Nancy Wilson</div><div class="t" style="left:88.10px;top:1020px;font-size:7px;line-height:7px;color:#666;-webkit-text-stroke:0.12px #666;">212</div><div class="t" style="left:207.70px;top:1014px;font-size:8.3px;line-height:8.3px;color:#3a3a3a;-webkit-text-stroke:0.15px #3a3a3a;">5</div><div class="t" style="left:355.70px;top:1014px;font-size:8.3px;line-height:8.3px;color:#3a3a3a;letter-spacing:-0.15px;-webkit-text-stroke:0.15px #3a3a3a;">7 days ago</div><div class="t" style="left:503.70px;top:1014px;font-size:8.3px;line-height:8.3px;color:#3a3a3a;letter-spacing:-0.15px;-webkit-text-stroke:0.15px #3a3a3a;">3</div><div class="t" style="left:651.70px;top:1014px;font-size:8.3px;line-height:8.3px;color:#3a3a3a;letter-spacing:-0.15px;-webkit-text-stroke:0.15px #3a3a3a;">2</div><div class="b" style="left:61.00px;top:1030.21px;width:726.00px;height:0.90px;background:#efeff1;"></div><div class="b" style="left:70.00px;top:1037.71px;width:13.20px;height:13.20px;background:#5a52c8;border-radius:2px;"></div><div class="t" style="left:70.00px;top:1042px;font-size:6.9px;line-height:6.9px;color:#fff;letter-spacing:-0.2px;-webkit-text-stroke:0.12px #fff;width:13.2px;text-align:center;">OA</div><div class="t" style="left:88.10px;top:1036px;font-size:8.1px;line-height:8.1px;color:#262626;letter-spacing:-0.05px;-webkit-text-stroke:0.22px #262626;">Oliver Anderson</div><div class="t" style="left:88.10px;top:1047px;font-size:7px;line-height:7px;color:#666;-webkit-text-stroke:0.12px #666;">213</div><div class="t" style="left:207.70px;top:1040px;font-size:8.3px;line-height:8.3px;color:#3a3a3a;-webkit-text-stroke:0.15px #3a3a3a;">5</div><div class="t" style="left:355.70px;top:1040px;font-size:8.3px;line-height:8.3px;color:#3a3a3a;letter-spacing:-0.15px;-webkit-text-stroke:0.15px #3a3a3a;">7 days ago</div><div class="t" style="left:503.70px;top:1040px;font-size:8.3px;line-height:8.3px;color:#3a3a3a;letter-spacing:-0.15px;-webkit-text-stroke:0.15px #3a3a3a;">3</div><div class="t" style="left:651.70px;top:1040px;font-size:8.3px;line-height:8.3px;color:#3a3a3a;letter-spacing:-0.15px;-webkit-text-stroke:0.15px #3a3a3a;">2</div><div class="b" style="left:61.00px;top:1056.88px;width:726.00px;height:0.90px;background:#efeff1;"></div><div class="b" style="left:70.00px;top:1064.38px;width:13.20px;height:13.20px;background:#5a52c8;border-radius:2px;"></div><div class="t" style="left:70.00px;top:1069px;font-size:6.9px;line-height:6.9px;color:#fff;letter-spacing:-0.2px;-webkit-text-stroke:0.12px #fff;width:13.2px;text-align:center;">PT</div><div class="t" style="left:88.10px;top:1063px;font-size:8.1px;line-height:8.1px;color:#262626;letter-spacing:-0.05px;-webkit-text-stroke:0.22px #262626;">Peter Thomas</div><div class="t" style="left:88.10px;top:1074px;font-size:7px;line-height:7px;color:#666;-webkit-text-stroke:0.12px #666;">214</div><div class="t" style="left:207.70px;top:1067px;font-size:8.3px;line-height:8.3px;color:#3a3a3a;-webkit-text-stroke:0.15px #3a3a3a;">5</div><div class="t" style="left:355.70px;top:1067px;font-size:8.3px;line-height:8.3px;color:#3a3a3a;letter-spacing:-0.15px;-webkit-text-stroke:0.15px #3a3a3a;">7 days ago</div><div class="t" style="left:503.70px;top:1067px;font-size:8.3px;line-height:8.3px;color:#3a3a3a;letter-spacing:-0.15px;-webkit-text-stroke:0.15px #3a3a3a;">3</div><div class="t" style="left:651.70px;top:1067px;font-size:8.3px;line-height:8.3px;color:#3a3a3a;letter-spacing:-0.15px;-webkit-text-stroke:0.15px #3a3a3a;">2</div><div class="b" style="left:194.30px;top:684.00px;width:0.80px;height:400.00px;background:#efeff1;"></div>
</div></body></html>
